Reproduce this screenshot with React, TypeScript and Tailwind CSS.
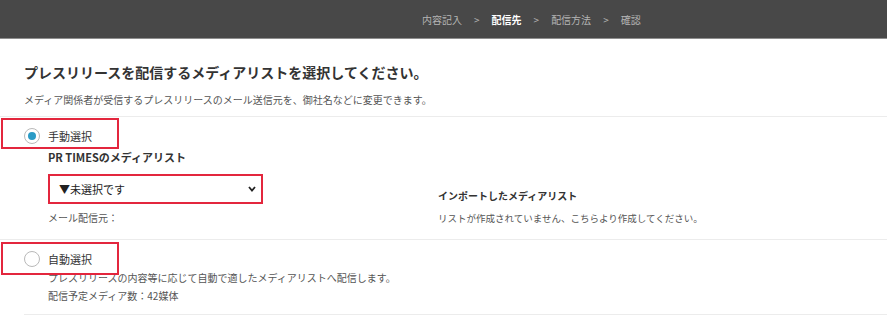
const steps = [
  { label: '内容記入', active: false },
  { label: '配信先', active: true },
  { label: '配信方法', active: false },
  { label: '確認', active: false },
];

function Radio({ checked }: { checked?: boolean }) {
  return (
    <span className="w-4 h-4 rounded-full border border-[#b9b9b9] bg-white flex items-center justify-center shrink-0">
      {checked && <span className="w-[8px] h-[8px] rounded-full bg-[#2b9bc6]" />}
    </span>
  );
}

export default function App() {
  return (
    <div className="w-[887px] h-[320px] bg-white overflow-hidden text-[#333] font-['Noto_Sans_CJK_JP','Noto_Sans',sans-serif]">
      <div className="h-[39px] bg-[#484848] border-b border-[#8e8e8e] flex items-center pl-[422px] text-[10px] text-[#b4b4b4]">
        {steps.map((s, i) => (
          <div key={s.label} className="flex items-center">
            {i > 0 && <span className="mx-[12px] text-[#b4b4b4]">&gt;</span>}
            <span className={s.active ? 'text-white font-bold' : ''}>{s.label}</span>
          </div>
        ))}
      </div>

      <div className="px-[24px] pt-[23px]">
        <h1 className="text-[14px] leading-[20px] font-bold text-[#333]">
          プレスリリースを配信するメディアリストを選択してください。
        </h1>
        <p className="mt-[11px] text-[10px] leading-[14px] text-[#555]">
          メディア関係者が受信するプレスリリースのメール送信元を、御社名などに変更できます。
        </p>
      </div>

      <section className="mt-[9px] border-t border-[#ececec] pt-[9px] pb-[14px]">
        <div className="relative flex items-center gap-2 pl-[24px] h-[20px]">
          <Radio checked />
          <span className="text-[11px] text-[#333]">手動選択</span>
          <div className="absolute left-[1px] top-[-8px] w-[118px] h-[31px] border-2 border-[#e3263d]" />
        </div>
        <div className="pl-[48px] flex items-end">
          <div className="w-[390px]">
            <p className="mt-[4px] text-[11px] leading-[14px] font-bold text-[#333]">PR TIMESのメディアリスト</p>
            <div className="mt-[10px] w-[215px] h-[30px] border-2 border-[#e3263d] bg-white flex items-center justify-between pl-[9px] pr-[5px] text-[11px] text-[#222]">
              <span>▼未選択です</span>
              <svg width="8" height="6" viewBox="0 0 8 6">
                <polyline points="1,1 4,4.5 7,1" fill="none" stroke="#222" strokeWidth="1.8" />
              </svg>
            </div>
            <p className="mt-[7px] text-[10px] leading-[14px] text-[#555]">メール配信元：</p>
          </div>
          <div>
            <p className="text-[10px] leading-[14px] font-bold text-[#333]">インポートしたメディアリスト</p>
            <p className="mt-[8px] text-[9.5px] leading-[14px] text-[#555]">
              リストが作成されていません、こちらより作成してください。
            </p>
          </div>
        </div>
      </section>

      <section className="border-t border-[#ececec] pt-[9px] pb-[11px]">
        <div className="relative flex items-center gap-2 pl-[24px] h-[20px]">
          <Radio />
          <span className="text-[11px] text-[#333]">自動選択</span>
          <div className="absolute left-[1px] top-[-7px] w-[118px] h-[33px] border-2 border-[#e3263d]" />
        </div>
        <div className="pl-[48px]">
          <p className="mt-[2px] text-[10px] leading-[14px] text-[#555]">
            プレスリリースの内容等に応じて自動で適したメディアリストへ配信します。
          </p>
          <p className="mt-[4px] text-[10px] leading-[14px] text-[#555]">配信予定メディア数：42媒体</p>
        </div>
      </section>
      <div className="ml-[24px] border-t border-[#ececec]" />
    </div>
  );
}
